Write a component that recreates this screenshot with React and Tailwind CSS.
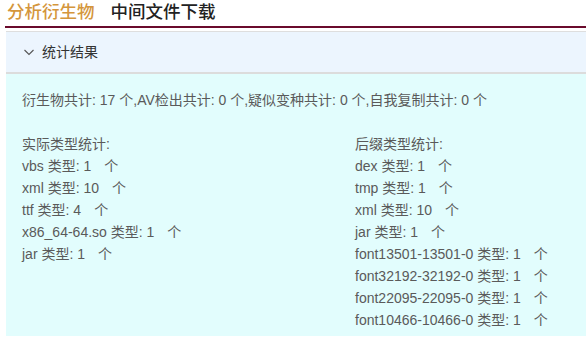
import React from "react";

const actualTypes = [
  { name: "vbs", count: 1 },
  { name: "xml", count: 10 },
  { name: "ttf", count: 4 },
  { name: "x86_64-64.so", count: 1 },
  { name: "jar", count: 1 },
];

const suffixTypes = [
  { name: "dex", count: 1 },
  { name: "tmp", count: 1 },
  { name: "xml", count: 10 },
  { name: "jar", count: 1 },
  { name: "font13501-13501-0", count: 1 },
  { name: "font32192-32192-0", count: 1 },
  { name: "font22095-22095-0", count: 1 },
  { name: "font10466-10466-0", count: 1 },
];

const TypeList = ({ title, items, className }) => (
  <div className={className}>
    <div className="h-[22px] leading-[22px]">{title}</div>
    {items.map((item, i) => (
      <div key={i} className="h-[22px] leading-[22px] whitespace-pre">
        {item.name} 类型: {item.count}
        <span className="ml-[13px]">个</span>
      </div>
    ))}
  </div>
);

const App = () => {
  return (
    <div
      className="w-[586px] h-[339px] bg-white overflow-hidden"
      style={{ fontFamily: '"Liberation Sans", "Noto Sans CJK SC", sans-serif' }}
    >
      {/* tabs */}
      <div className="flex items-end gap-[16px] h-[28px] border-b-2 border-[#6a0a2c] ml-[5px] pl-[2px]">
        <span className="text-[17.5px] leading-[24px] font-medium text-[#d4963c] pb-[2px]">
          分析衍生物
        </span>
        <span className="text-[17.5px] leading-[24px] font-medium text-[#222] pb-[2px]">
          中间文件下载
        </span>
      </div>

      {/* panel */}
      <div className="ml-[6px] mt-[3px] border-t border-[#dedede]">
        <div className="h-[42px] bg-[#ecf5fe] flex items-center pl-[16px] text-[14px] text-[#333] border-b-2 border-[#dcdcdc]">
          <svg
            width="12"
            height="12"
            viewBox="0 0 12 12"
            className="mr-[7px] ml-[1px]"
          >
            <path
              d="M1.5 4 L6 8.5 L10.5 4"
              fill="none"
              stroke="#555"
              strokeWidth="1.1"
            />
          </svg>
          统计结果
        </div>
        <div className="bg-[#e2fdfd] h-[262px] pl-[16px] pt-[15px] text-[14px] text-[#5a5a5a]">
          <div className="h-[22px] leading-[22px]">
            衍生物共计: 17 个,AV检出共计: 0 个,疑似变种共计: 0 个,自我复制共计: 0 个
          </div>
          <div className="h-[22px]" />
          <div className="flex">
            <TypeList
              className="w-[333px]"
              title="实际类型统计:"
              items={actualTypes}
            />
            <TypeList title="后缀类型统计:" items={suffixTypes} />
          </div>
        </div>
      </div>
    </div>
  );
};

export default App;
